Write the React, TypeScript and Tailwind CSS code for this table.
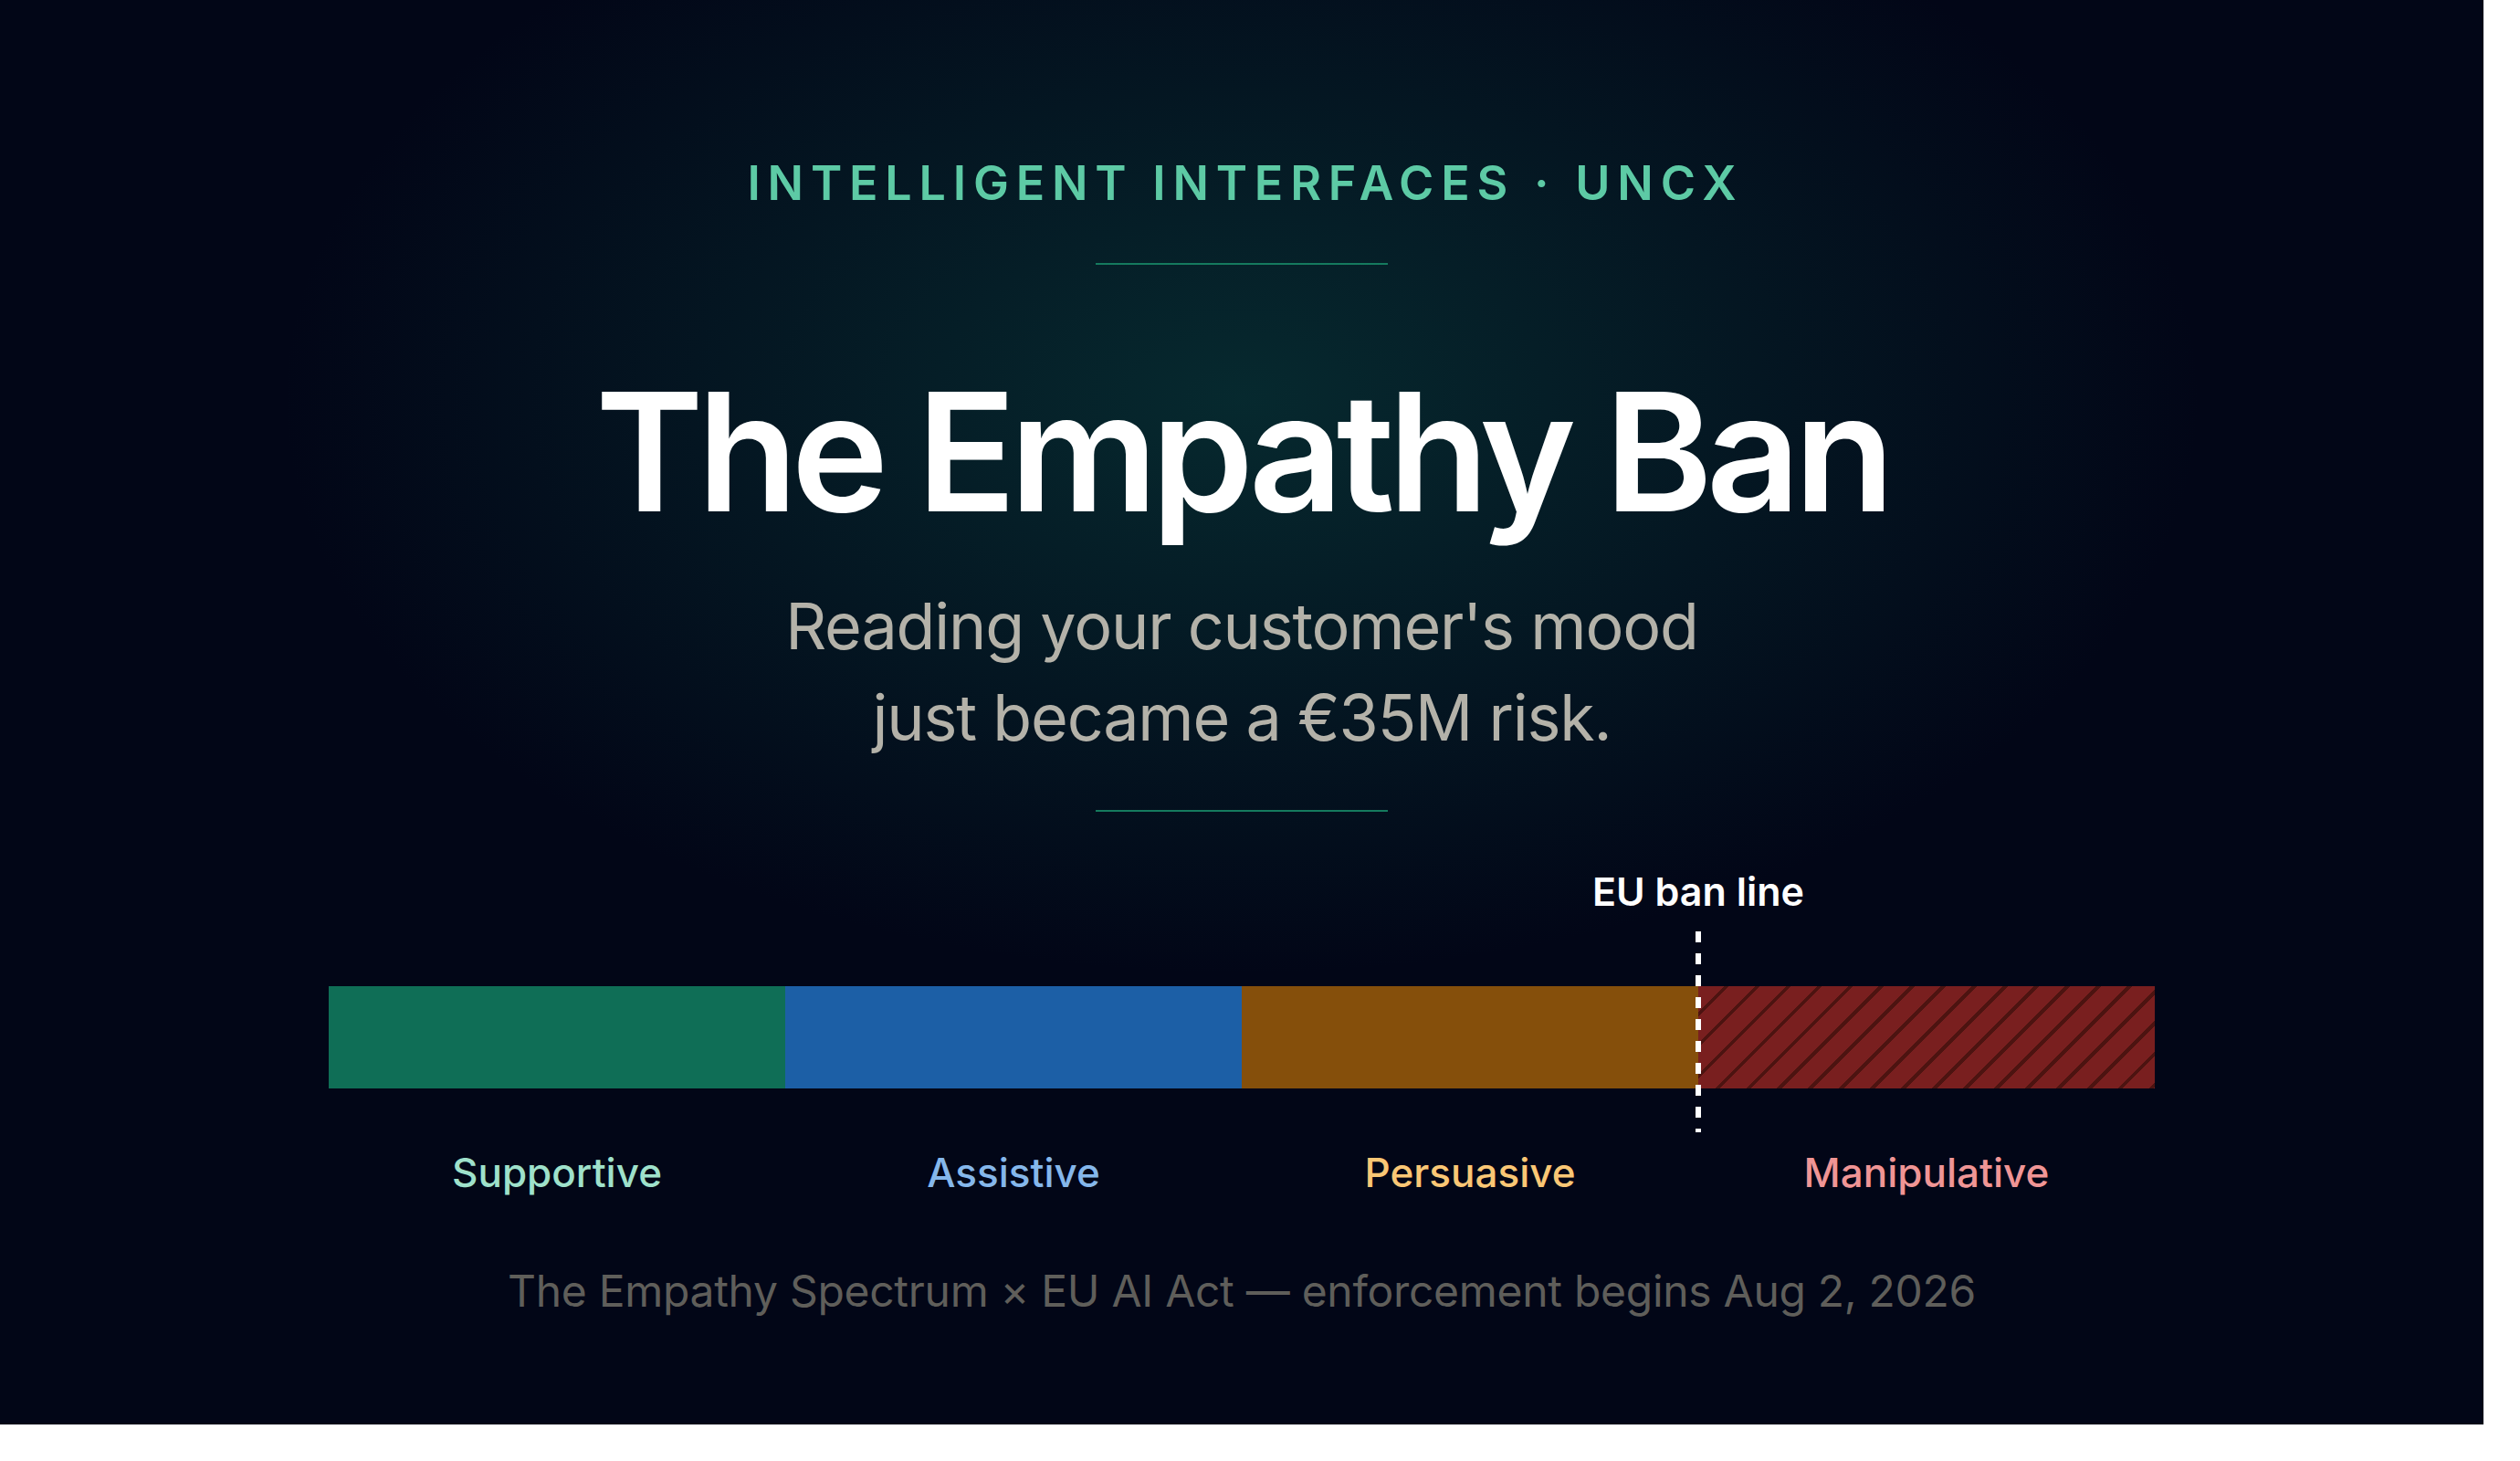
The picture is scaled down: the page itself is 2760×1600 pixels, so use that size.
const segments = [
  { label: "Supportive", bar: "bg-[#0f6e56]", text: "text-[#9fe1cb]" },
  { label: "Assistive", bar: "bg-[#1c5fa6]", text: "text-[#85b7eb]" },
  { label: "Persuasive", bar: "bg-[#854f0b]", text: "text-[#fac775]" },
  { label: "Manipulative", bar: "bg-[#791f1f]", text: "text-[#f09595]" },
];

const DashedLine = () => (
  <svg width="6" height="220" viewBox="0 0 6 220" className="absolute left-[1497px] top-[65px]">
    <line x1="3" y1="0" x2="3" y2="220" stroke="#ffffff" strokeWidth="6" strokeDasharray="12 12" />
  </svg>
);

export default function App() {
  return (
    <div className="w-[2720px] h-[1560px] bg-[#020617] bg-[radial-gradient(ellipse_1500px_900px_at_50%_28%,rgba(10,70,66,0.55),rgba(2,6,23,0)_70%)] font-['Inter','Noto_Sans',sans-serif] flex flex-col items-center">
      {/* Eyebrow */}
      <p className="mt-[175px] text-[52px] leading-none font-semibold tracking-[0.15em] text-[#5dcaa5] pl-[0.15em]">
        INTELLIGENT INTERFACES · UNCX
      </p>
      <div className="mt-[61px] w-[320px] h-[2px] bg-[#157a5e]" />

      {/* Title */}
      <h1 className="mt-[115px] text-[180px] leading-none font-semibold tracking-[-0.04em] text-white">
        The Empathy Ban
      </h1>
      <p className="mt-[51px] text-[70px] leading-[100px] text-[#b4b2a9] text-center tracking-[-0.017em]">
        Reading your customer's mood
        <br />
        just became a €35M risk.
      </p>
      <div className="mt-[51px] w-[320px] h-[2px] bg-[#157a5e]" />

      {/* Spectrum */}
      <div className="relative mt-[66px] w-[2000px]">
        <span className="absolute left-[1500px] top-0 -translate-x-1/2 whitespace-nowrap text-[43px] leading-none font-semibold text-white">
          EU ban line
        </span>
        <div className="mt-[125px] h-[112px] flex">
          {segments.map((s, i) => (
            <div
              key={s.label}
              className={
                i === 3
                  ? "flex-1 bg-[#791f1f] bg-[image:repeating-linear-gradient(135deg,rgba(0,0,0,0)_0px,rgba(0,0,0,0)_20px,rgba(40,10,5,0.55)_20px,rgba(40,10,5,0.55)_24px)]"
                  : `flex-1 ${s.bar}`
              }
            />
          ))}
        </div>
        <DashedLine />
        <div className="mt-[70px] grid grid-cols-4">
          {segments.map((s) => (
            <span key={s.label} className={`text-center text-[44px] leading-none font-medium ${s.text}`}>
              {s.label}
            </span>
          ))}
        </div>
      </div>

      <p className="mt-[84px] text-[48px] leading-none tracking-[-0.006em] text-[#5f5e5a]">
        The Empathy Spectrum × EU AI Act — enforcement begins Aug 2, 2026
      </p>
    </div>
  );
}
